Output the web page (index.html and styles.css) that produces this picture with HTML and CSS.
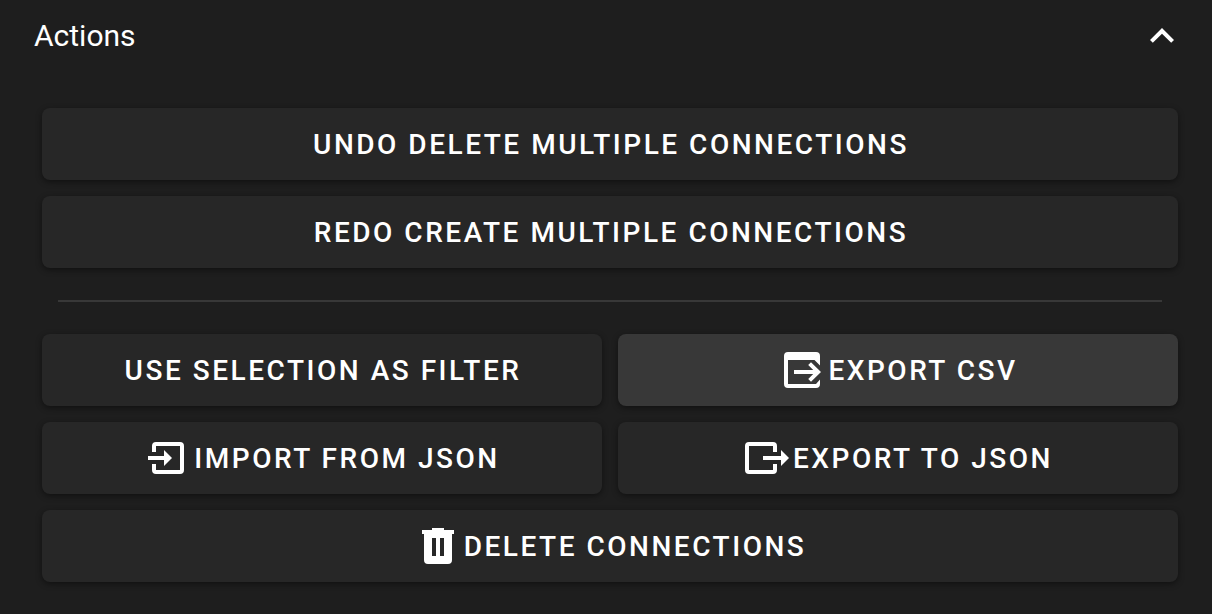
FILE: index.html
```html
<!DOCTYPE html>
<html lang="en">
<head>
<meta charset="utf-8">
<title>Actions</title>
<link rel="stylesheet" href="styles.css">
</head>
<body>
<section class="panel">
  <button class="panel-header" type="button" aria-expanded="true">
    <span>Actions</span>
    <svg class="icon" viewBox="0 0 24 24" aria-hidden="true"><path d="M7.41 15.41 12 10.83l4.59 4.58L18 14l-6-6-6 6z"/></svg>
  </button>
  <div class="actions">
    <button class="btn wide" type="button"><span class="label">Undo delete multiple connections</span></button>
    <button class="btn wide" type="button"><span class="label">Redo create multiple connections</span></button>
    <hr class="divider">
    <button class="btn" type="button"><span class="label">Use selection as filter</span></button>
    <button class="btn active" type="button">
      <svg class="icon" viewBox="0 0 48 48" aria-hidden="true"><path d="M10 6h28a4 4 0 0 1 4 4v9.500l-5.500-5.500H10v24h28l4-4.500V38a4 4 0 0 1-4 4H10a4 4 0 0 1-4-4V10a4 4 0 0 1 4-4z"/><path d="M16 24h19.200l-5-5 2.800-2.800L43 26l-10 9.800-2.800-2.800 5-5H16z"/></svg>
      <span class="label">Export CSV</span>
    </button>
    <button class="btn" type="button">
      <svg class="icon" viewBox="0 0 48 48" aria-hidden="true"><path fill="none" stroke="currentColor" stroke-width="4" d="M10 18v-6a2 2 0 0 1 2-2h24a2 2 0 0 1 2 2v24a2 2 0 0 1-2 2H12a2 2 0 0 1-2-2v-6M4 24h18"/><path d="M20 16l8 8-8 8z"/></svg>
      <span class="label">Import from JSON</span>
    </button>
    <button class="btn" type="button">
      <svg class="icon" viewBox="0 0 48 48" aria-hidden="true"><path fill="none" stroke="currentColor" stroke-width="4" d="M32 18v-6a2 2 0 0 0-2-2H6a2 2 0 0 0-2 2v24a2 2 0 0 0 2 2h24a2 2 0 0 0 2-2v-6M20 24h20"/><path d="M38 16l8 8-8 8z"/></svg>
      <span class="label">Export to JSON</span>
    </button>
    <button class="btn wide" type="button">
      <svg class="icon" viewBox="0 0 48 48" aria-hidden="true"><path fill-rule="evenodd" d="M18 6h12v2h10v4h-2v26a4 4 0 0 1-4 4H14a4 4 0 0 1-4-4V12H8V8h10zM18 16v18h4V16zM26 16v18h4V16z"/></svg>
      <span class="label">Delete connections</span>
    </button>
  </div>
</section>
</body>
</html>
```
FILE: styles.css
```css
* { box-sizing: border-box; }
body {
  margin: 0;
  background: #1e1e1e;
  color: #fff;
  font-family: Roboto, "Liberation Sans", sans-serif;
}
.panel-header {
  display: flex;
  align-items: center;
  justify-content: space-between;
  width: 100%;
  height: 72px;
  padding: 0 26px 0 34px;
  border: 0;
  background: none;
  color: inherit;
  font: 400 30px/40px Roboto, "Liberation Sans", sans-serif;
}
.actions {
  display: grid;
  grid-template-columns: 1fr 1fr;
  gap: 16px;
  padding: 36px 34px 32px 42px;
}
.btn {
  display: flex;
  align-items: center;
  justify-content: center;
  height: 72px;
  padding: 0 32px;
  border: 0;
  border-radius: 8px;
  background: #272727;
  box-shadow: 0 2px 6px rgba(0, 0, 0, 0.45);
  color: inherit;
  font: 500 28px/36px Roboto, "Liberation Sans", sans-serif;
  letter-spacing: 0.09em;
  text-transform: uppercase;
  white-space: nowrap;
}
.label { padding: 2px 0 0 2px; }
.wide { grid-column: 1 / -1; }
.active { background: #383838; }
.icon { width: 48px; height: 48px; fill: currentColor; }
.divider {
  grid-column: 1 / -1;
  width: auto;
  height: 2px;
  margin: 16px;
  border: 0;
  background: #383838;
}
```
